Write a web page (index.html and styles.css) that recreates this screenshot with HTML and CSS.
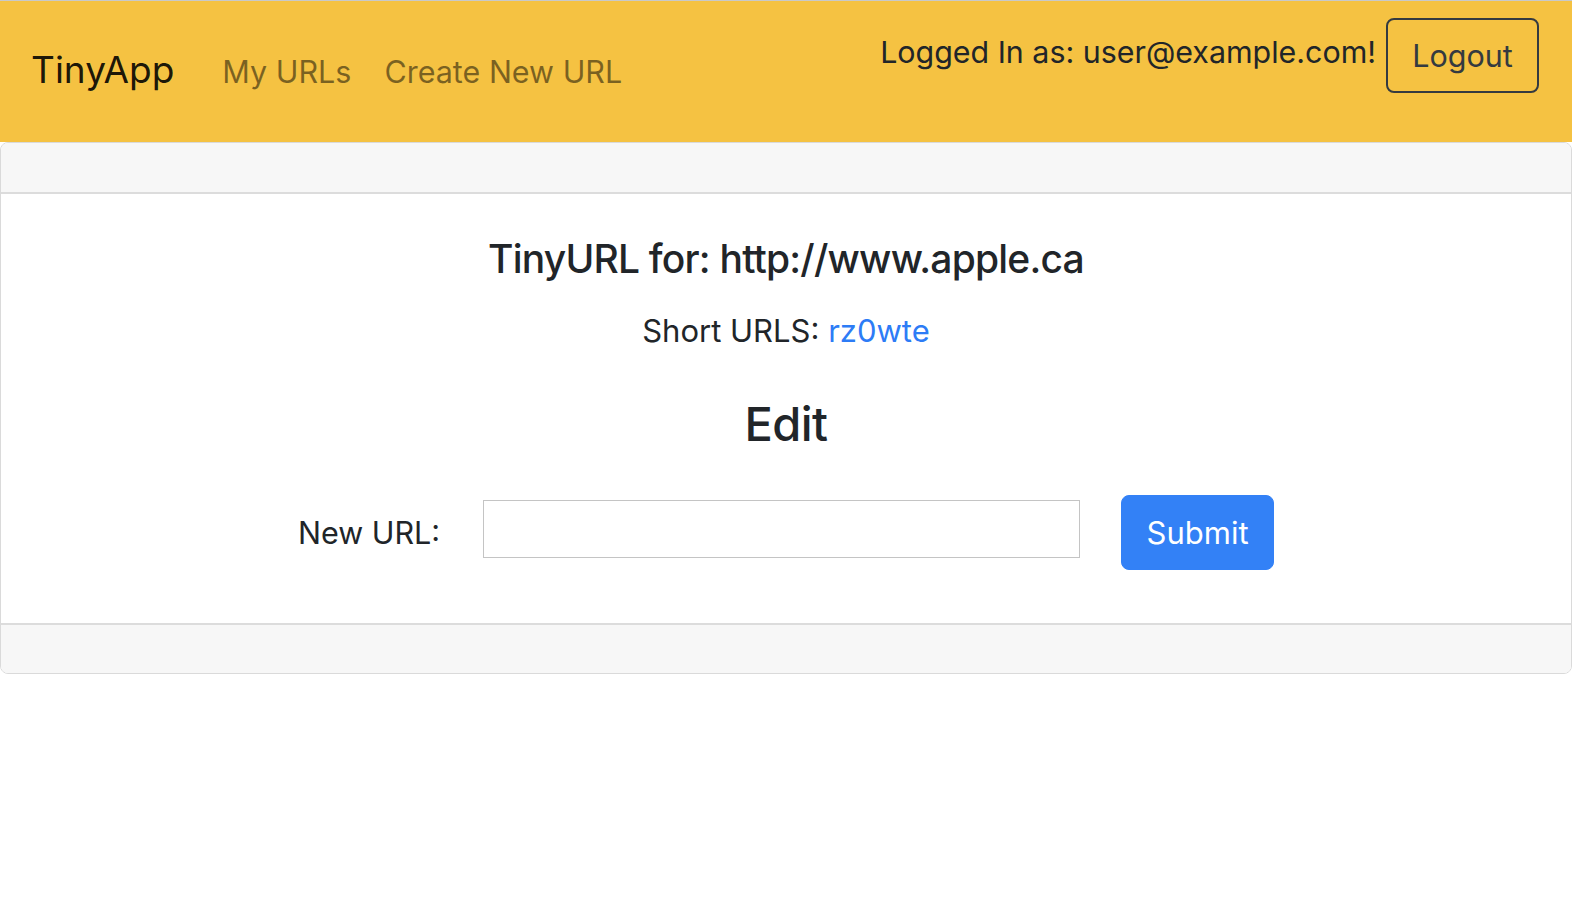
FILE: index.html
```html
<!DOCTYPE html>
<html lang="en">
<head>
<meta charset="utf-8">
<title>TinyApp</title>
<link rel="stylesheet" href="styles.css">
</head>
<body>
<nav class="navbar">
  <div class="nav-left">
    <a class="brand" href="#">TinyApp</a>
    <a class="nav-link" href="#">My URLs</a>
    <a class="nav-link" href="#">Create New URL</a>
  </div>
  <div class="nav-right">
    <span class="logged">Logged In as: user@example.com!</span>
    <button class="btn btn-outline" type="button">Logout</button>
  </div>
</nav>
<div class="card">
  <div class="card-header"></div>
  <div class="card-body">
    <h4 class="title">TinyURL for: http://www.apple.ca</h4>
    <p class="short">Short URLS: <a href="#">rz0wte</a></p>
    <h3 class="edit">Edit</h3>
    <form class="form-row">
      <label class="label" for="newurl">New URL:</label>
      <input class="input" id="newurl" type="text">
      <button class="btn btn-primary" type="button">Submit</button>
    </form>
  </div>
  <div class="card-footer"></div>
</div>
</body>
</html>
```
FILE: styles.css
```css
* { box-sizing: border-box; }
html, body { margin: 0; padding: 0; background: #fff; }
body {
  font-family: Inter, "Noto Sans", sans-serif;
  color: #212529;
  font-size: 30.5px;
}
a { text-decoration: none; }

.navbar {
  height: 142px;
  background: #f5c242;
  border-top: 1px solid #c9c9c9;
  display: flex;
  justify-content: space-between;
  align-items: flex-start;
  padding: 0 33px 0 31px;
}
.nav-left {
  display: flex;
  align-items: baseline;
  height: 100%;
  padding-top: 47px;
}
.brand {
  color: rgba(0,0,0,0.9);
  font-size: 37px;
  line-height: 44px;
  margin-right: 48px;
}
.nav-link {
  color: rgba(0,0,0,0.5);
  font-size: 30.5px;
  line-height: 44px;
  margin-right: 33px;
}
.nav-right {
  display: flex;
  align-items: center;
  gap: 10px;
  padding-top: 17px;
}
.logged {
  color: #212529;
  font-size: 30.4px;
  line-height: 40px;
  margin-top: -7px;
}
.btn {
  font-family: inherit;
  font-size: 30.5px;
  height: 75px;
  width: 153px;
  border-radius: 8px;
  cursor: pointer;
  padding: 0;
}
.btn-outline {
  background: transparent;
  color: #343a40;
  border: 2px solid #343a40;
}
.btn-primary {
  background: #3381f6;
  color: #fff;
  border: 1px solid #3381f6;
  font-size: 31px;
}

.card {
  border: 1px solid #dadada;
  border-radius: 8px;
  overflow: hidden;
}
.card-header {
  height: 51px;
  background: #f7f7f7;
  border-bottom: 2px solid #dcdcdc;
}
.card-footer {
  height: 50px;
  background: #f7f7f7;
  border-top: 2px solid #dcdcdc;
}
.card-body {
  padding: 40px 0 53px;
  text-align: center;
}
.title {
  margin: 0;
  font-size: 39px;
  font-weight: 500;
  letter-spacing: -0.8px;
  line-height: 50px;
}
.short {
  margin: 27px 0 0;
  font-size: 31px;
  line-height: 40px;
}
.short a { color: #2d7cf6; }
.edit {
  margin: 43px 0 0;
  font-size: 47px;
  font-weight: 500;
  letter-spacing: -0.6px;
  line-height: 60px;
}
.form-row {
  margin-top: 41px;
  display: flex;
  justify-content: center;
  align-items: center;
}
.label {
  font-size: 30.5px;
  margin-right: 43px;
}
.input {
  width: 597px;
  height: 58px;
  border: 1px solid #c4c4c4;
  border-radius: 0;
  margin-right: 41px;
  margin-top: -8px;
  font-family: inherit;
  font-size: 29px;
}
```
